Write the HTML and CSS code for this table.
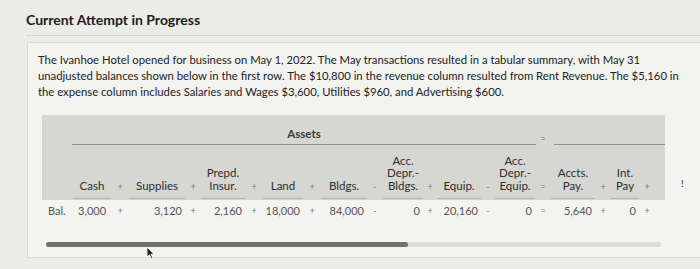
FILE: index.html
```html
<!DOCTYPE html>
<html>
<head>
<meta charset="utf-8">
<link rel="stylesheet" href="styles.css">
</head>
<body>
<div class="page">
  <div class="title">Current Attempt in Progress</div>
  <div class="rule"></div>
  <div class="card">
    <p class="para">The Ivanhoe Hotel opened for business on May 1, 2022. The May transactions resulted in a tabular summary, with May 31<br>unadjusted balances shown below in the first row. The $10,800 in the revenue column resulted from Rent Revenue. The $5,160 in<br>the expense column includes Salaries and Wages $3,600, Utilities $960, and Advertising $600.</p>
    <div class="tablewrap">
      <div class="head grid">
        <div class="group assets">Assets</div>
        <div class="group-eq">=</div>
        <div class="group liab"></div>

        <div class="blank"></div>
        <div class="col">Cash</div><div class="op">+</div>
        <div class="col">Supplies</div><div class="op">+</div>
        <div class="col">Prepd.<br>Insur.</div><div class="op">+</div>
        <div class="col">Land</div><div class="op">+</div>
        <div class="col">Bldgs.</div><div class="op">-</div>
        <div class="col">Acc.<br>Depr.-<br>Bldgs.</div><div class="op">+</div>
        <div class="col">Equip.</div><div class="op">-</div>
        <div class="col">Acc.<br>Depr.-<br>Equip.</div><div class="op">=</div>
        <div class="col">Accts.<br>Pay.</div><div class="op">+</div>
        <div class="col">Int.<br>Pay</div><div class="op">+</div>
        <div class="blank"></div>
      </div>
      <div class="bang">!</div>
      <div class="data grid">
        <div class="lbl">Bal.</div>
        <div class="num first">3,000</div><div class="dop">+</div>
        <div class="num">3,120</div><div class="dop">+</div>
        <div class="num">2,160</div><div class="dop">+</div>
        <div class="num">18,000</div><div class="dop">+</div>
        <div class="num">84,000</div><div class="dop">-</div>
        <div class="num">0</div><div class="dop">+</div>
        <div class="num">20,160</div><div class="dop">-</div>
        <div class="num">0</div><div class="dop">=</div>
        <div class="num">5,640</div><div class="dop">+</div>
        <div class="num">0</div><div class="dop">+</div>
        <div class="blank"></div>
      </div>
      <div class="scroll"><div class="thumb"></div></div>
      <svg class="cursor" width="9" height="14" viewBox="0 0 9 14"><path d="M1 1 L1 11 L3.5 8.8 L5.3 12.8 L6.8 12.1 L5 8.2 L8 8.2 Z" fill="#222" stroke="#fff" stroke-width="0.8"/></svg>
    </div>
  </div>
</div>
</body>
</html>
```

FILE: styles.css
```css
html, body {
  margin: 0;
  padding: 0;
}
body {
  width: 700px;
  height: 269px;
  overflow: hidden;
  background: #ebebe7;
  font-family: Lato, "Open Sans", sans-serif;
  color: #2c2c2c;
}
.page {
  padding: 11px 0 0 26px;
}
.title {
  font-size: 14px;
  font-weight: 700;
  color: #1c1c1c;
  line-height: 17px;
}
.rule {
  margin-top: 7px;
  border-top: 1px solid #d6d6d1;
}
.card {
  margin-top: 6px;
  margin-left: 1px;
  border: 1px solid #d9d9d4;
  border-right: none;
  background: #f3f3f0;
  padding: 9px 0 10px 10px;
}
.para {
  margin: 0;
  font-size: 11.3px;
  line-height: 16px;
  color: #222;
  white-space: nowrap;
}
.tablewrap {
  position: relative;
  margin-top: 15px;
  margin-left: 4px;
  width: 623px;
}
.grid {
  display: grid;
  grid-template-columns: 30px 40px 16px 58px 14px 46px 16px 42px 16px 48px 14px 42px 12px 46px 12px 42px 14px 46px 14px 30px 14px 11px;
}
.head {
  background: #d6d6d2;
  grid-template-rows: 30px 54px;
  padding-bottom: 1px;
}
.group {
  font-size: 11.5px;
  font-weight: 700;
  color: #3a3a3a;
  border-bottom: 1px solid #8f8f8b;
  text-align: center;
  display: flex;
  align-items: flex-end;
  justify-content: center;
  padding-bottom: 4px;
}
.assets {
  grid-column: 2 / 17;
  grid-row: 1;
}
.group-eq {
  grid-column: 17;
  grid-row: 1;
  font-size: 9px;
  color: #666;
  display: flex;
  align-items: flex-end;
  justify-content: center;
  padding-bottom: 1px;
}
.liab {
  grid-column: 18 / 23;
  grid-row: 1;
  margin-left: 4px;
}
.col {
  grid-row: 2;
  font-size: 11.5px;
  line-height: 12.5px;
  color: #2e2e2e;
  text-align: center;
  display: flex;
  align-items: flex-end;
  justify-content: center;
  border-bottom: 1px solid #b3b3ae;
  padding-bottom: 6px;
  margin: 0 1px;
}
.op {
  grid-row: 2;
  font-size: 9px;
  color: #777;
  text-align: center;
  display: flex;
  align-items: flex-end;
  justify-content: center;
  padding-bottom: 7px;
}
.blank {
  grid-row: 2;
}
.bang {
  position: absolute;
  left: 639px;
  top: 62px;
  font-size: 10px;
  color: #333;
}
.data {
  height: 29px;
  align-items: center;
  font-size: 11px;
  color: #555;
}
.lbl {
  padding-left: 6px;
  color: #555;
}
.num {
  text-align: right;
  padding-right: 4px;
}
.num.first {
  text-align: left;
  padding-left: 6px;
}
.dop {
  text-align: center;
  font-size: 9px;
  color: #777;
}
.scroll {
  margin-top: 13px;
  margin-left: 4px;
  width: 615px;
  height: 5px;
  border-radius: 3px;
  background: #dcdcd8;
}
.thumb {
  width: 362px;
  height: 5px;
  border-radius: 3px;
  background: #6f6f6d;
}
.cursor {
  position: absolute;
  left: 104px;
  top: 131px;
}
```
